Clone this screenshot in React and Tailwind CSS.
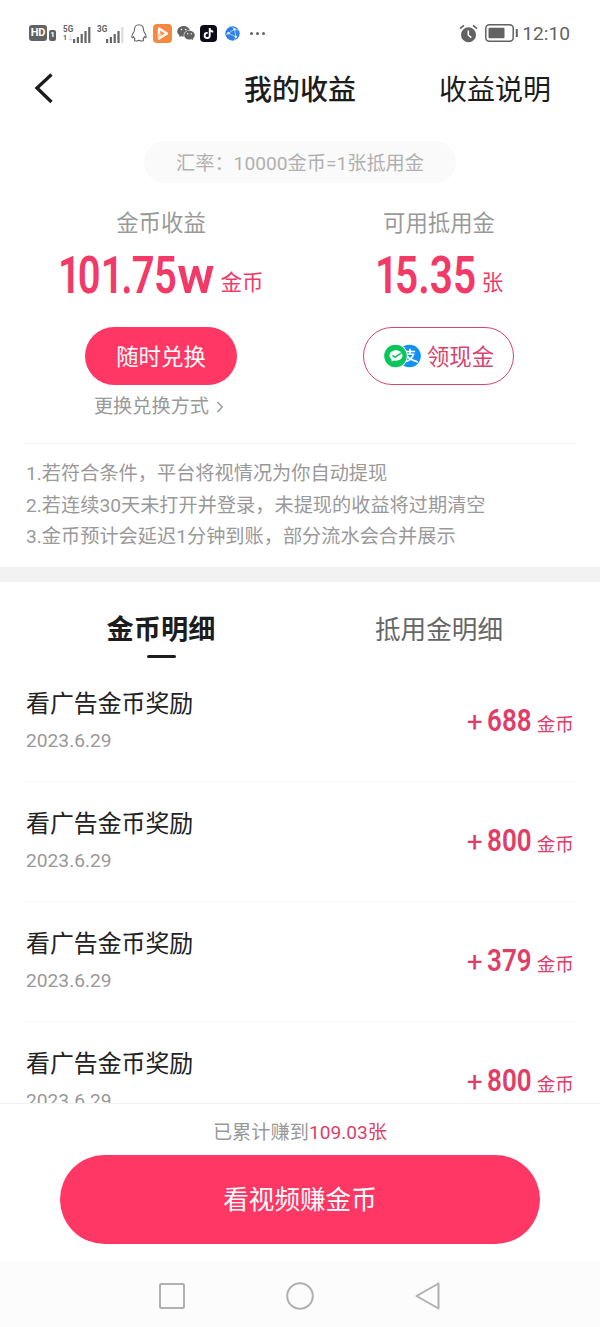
import { AiFillWechat } from 'react-icons/ai'
import { FaTiktok } from 'react-icons/fa6'

const records = [
  { id: 1, title: '看广告金币奖励', date: '2023.6.29', amount: '688' },
  { id: 2, title: '看广告金币奖励', date: '2023.6.29', amount: '800' },
  { id: 3, title: '看广告金币奖励', date: '2023.6.29', amount: '379' },
  { id: 4, title: '看广告金币奖励', date: '2023.6.29', amount: '800' },
]

const notes = [
  '1.若符合条件，平台将视情况为你自动提现',
  '2.若连续30天未打开并登录，未提现的收益将过期清空',
  '3.金币预计会延迟1分钟到账，部分流水会合并展示',
]

// Signal bars, the last one is faded when the signal is not full
function SignalIcon({ faded }) {
  return (
    <svg className="h-4 w-[18px]" viewBox="0 0 18 16" fill="#666" aria-hidden="true">
      <rect x="0" y="12" width="2.2" height="4" />
      <rect x="3.8" y="10" width="2.2" height="6" />
      <rect x="7.6" y="7" width="2.2" height="9" />
      <rect x="11.4" y="4" width="2.2" height="12" />
      <rect x="15.2" y="0" width="2.2" height="16" fill={faded ? '#ddd' : '#666'} />
    </svg>
  )
}

function PenguinIcon() {
  return (
    <svg
      className="h-[18px] w-4"
      viewBox="0 0 16 18"
      fill="none"
      stroke="#666"
      strokeWidth="1.1"
      strokeLinejoin="round"
      aria-hidden="true"
    >
      <path d="M8 .8c-2.8 0-4.5 2-4.5 4.8 0 .8-.1 1.3-.5 2C1.8 9.400.8 11.200.8 12.800c0 1.200.7 1 1.700-.300.300 1 .8 1.800 1.500 2.400-.9.500-1 1.900.6 2.100 1.300.1 2.400-.2 3.400-.8 1 .6 2.100.9 3.400.8 1.600-.2 1.500-1.600.6-2.100.7-.6 1.200-1.400 1.500-2.400 1 1.300 1.700 1.500 1.700.3 0-1.600-1-3.400-2.200-5.200-.4-.7-.5-1.200-.5-2C12.500 2.800 10.800.8 8 .8z" />
    </svg>
  )
}

function VideoAppIcon() {
  return (
    <svg className="h-[19px] w-[19px]" viewBox="0 0 19 19" aria-hidden="true">
      <rect width="19" height="19" rx="4" fill="#f5893f" />
      <path
        d="M6 4.600 14 9.600 6 14.600z"
        fill="#f5893f"
        stroke="#fff"
        strokeWidth="2.300"
        strokeLinejoin="round"
      />
      <path d="M4.500 9.200 9.300 9.800 4.900 14.500z" fill="#ffd3b3" />
    </svg>
  )
}

function GlobeIcon() {
  return (
    <svg className="h-[15px] w-[15px]" viewBox="0 0 15 15" aria-hidden="true">
      <circle cx="7.5" cy="7.5" r="7.2" fill="#2f80e4" />
      <path
        d="M9.500 3.300 3.300 7.200 10.800 10.800zM9.500 3.300 7 .5M3.300 7.200.5 9M10.800 10.800 9.500 14.500M9.500 3.300l4.500 1"
        fill="none"
        stroke="#b9d8fb"
        strokeWidth=".8"
      />
      <circle cx="9.500" cy="3.300" r="1.200" fill="#e4f1ff" />
      <circle cx="3.300" cy="7.200" r="1.200" fill="#e4f1ff" />
      <circle cx="10.800" cy="10.800" r="1.200" fill="#e4f1ff" />
    </svg>
  )
}

function AlarmIcon() {
  return (
    <svg className="h-[19px] w-[19px]" viewBox="0 0 19 19" fill="none" aria-hidden="true">
      <circle cx="9.500" cy="10.700" r="7.500" fill="#626262" />
      <path d="M9.300 6.500v4.500l3 2.700" stroke="#fff" strokeWidth="1.600" />
      <path d="M1 4.600 5 1.400M18 4.600 14 1.400" stroke="#626262" strokeWidth="1.700" />
    </svg>
  )
}

function BatteryIcon() {
  return (
    <svg className="h-[18px] w-[34px]" viewBox="0 0 34 18" fill="none" aria-hidden="true">
      <rect x=".8" y=".8" width="27.400" height="16.400" rx="3.500" stroke="#626262" strokeWidth="1.500" />
      <rect x="3.500" y="3.700" width="16" height="10.600" rx="1" fill="#626262" />
      <path d="M31.800 5v8" stroke="#626262" strokeWidth="2" />
    </svg>
  )
}

function StatusBar() {
  return (
    <div className="flex h-[66px] items-center pr-[30px] pl-[29px] text-[#626262]">
      <div className="flex h-4 w-[18px] items-center justify-center rounded-[3px] bg-[#626262] text-[11px] font-bold tracking-tight text-white">
        HD
      </div>
      <div className="mt-1 ml-[2px] flex h-[11px] w-[7px] items-center justify-center rounded-[2px] bg-[#626262] text-[8px] font-bold text-white">
        1
      </div>
      <div className="ml-[7px] flex items-end">
        <div className="-mr-[1px] flex h-[19px] w-[11px] flex-col text-[9px] leading-[10px] font-bold">
          <span className="origin-left scale-x-90">5G</span>
          <span className="text-[7px] leading-[9px]">1<span className="text-[#ccc]">↓</span></span>
        </div>
        <SignalIcon />
      </div>
      <div className="ml-[6px] flex items-end">
        <div className="-mr-[2px] h-[19px] w-[11px] text-[9px] leading-[10px] font-bold">
          <div className="origin-left scale-x-90">3G</div>
        </div>
        <SignalIcon faded />
      </div>
      <div className="ml-[7px]"><PenguinIcon /></div>
      <div className="ml-[6px]"><VideoAppIcon /></div>
      <AiFillWechat className="ml-[4px] h-5 w-5" />
      <div className="ml-[4px] flex h-[17px] w-[17px] items-center justify-center rounded-[4px] bg-[#0d0a18]">
        <FaTiktok className="h-[11px] w-[11px] text-white" />
      </div>
      <div className="ml-[8px]"><GlobeIcon /></div>
      <div className="ml-[10px] flex gap-[3px]">
        <span className="h-[3px] w-[3px] rounded-full bg-[#626262]" />
        <span className="h-[3px] w-[3px] rounded-full bg-[#626262]" />
        <span className="h-[3px] w-[3px] rounded-full bg-[#626262]" />
      </div>
      <div className="ml-auto flex items-center">
        <AlarmIcon />
        <div className="ml-[7px]"><BatteryIcon /></div>
        <span className="ml-[3px] pt-px text-[19.2px] leading-6">12:10</span>
      </div>
    </div>
  )
}

function PayIcons() {
  return (
    <svg className="h-6 w-[37px]" viewBox="0 0 37 24" aria-hidden="true">
      <circle cx="25.500" cy="12" r="11.300" fill="#1190f5" />
      <path
        d="M21 7.500h10M26 4.800v5M22 10.200h7.500c-1.200 4-4 6.300-8 7.600M22.500 11c2 3.500 6 5.500 11.500 7"
        fill="none"
        stroke="#fff"
        strokeWidth="1.600"
      />
      <circle cx="11.500" cy="12" r="12.300" fill="#fff" />
      <circle cx="11.500" cy="12" r="11.300" fill="#07c75b" />
      <path d="M12 6.300c-3.700 0-6.500 2.300-6.500 5.300 0 1.700.9 3.100 2.300 4.100l-.3 2 2.200-1.200c.7.2 1.500.3 2.300.3 3.700 0 6.500-2.300 6.500-5.200 0-3-2.800-5.300-6.500-5.300z" fill="#fff" />
      <path d="m8.500 11.400 2.500 2 6.800-4.700" fill="none" stroke="#07c75b" strokeWidth="1.500" />
    </svg>
  )
}

function RecordRow({ title, date, amount }) {
  return (
    <li className="mx-[25px] flex h-[120px] shrink-0 items-start justify-between border-b border-[#f7f7f7]">
      <div className="pt-[26px] pl-[1px]">
        <div className="text-[23.900px] leading-8 text-[#222]">{title}</div>
        <div className="mt-[9px] text-[19.2px] leading-6 text-[#999]">{date}</div>
      </div>
      <div className="flex items-baseline pt-[41px] pr-[1px] text-[#e03d68]">
        <span className="w-[20px] text-[28px] leading-9">+</span>
        <span className="w-[50px] text-[31px] leading-9 font-semibold">
          <span className="inline-block origin-left scale-x-[0.84]">{amount}</span>
        </span>
        <span className="text-[18.7px] leading-9">金币</span>
      </div>
    </li>
  )
}

export default function App() {
  return (
    <div className="flex h-[1327px] w-[600px] flex-col overflow-hidden bg-white font-[Roboto,'Noto_Sans_CJK_SC',sans-serif]">
      <StatusBar />

      {/* Title bar */}
      <header className="grid h-11 grid-cols-3 items-center text-[28px] leading-10 text-[#1c1c1c]">
        <svg className="ml-[33px] h-8 w-6" viewBox="0 0 24 32" fill="none" aria-label="返回">
          <path d="M18.500 1.500 4 15 18.500 29" stroke="#1c1c1c" strokeWidth="3.300" />
        </svg>
        <h1 className="pt-[5px] text-center font-medium">我的收益</h1>
        <button className="mr-[49px] pt-[5px] text-right whitespace-nowrap">收益说明</button>
      </header>

      <div className="mx-auto mt-[31px] flex h-[42px] w-[312px] items-center justify-center rounded-full bg-[#fafafa] pt-[5px] text-[19.2px] text-[#b0b0b0]">
        汇率：10000金币=1张抵用金
      </div>

      {/* Balances */}
      <section className="mt-[26px] grid h-[217px] grid-cols-2 px-[22px]">
        <div className="flex flex-col items-center">
          <div className="text-[22.4px] leading-7 text-[#999]">金币收益</div>
          <div className="mt-[13px] flex h-[52px] items-baseline text-[#f23a68]">
            <span className="w-[162px] text-[52px] leading-[52px] font-semibold whitespace-nowrap">
              <span className="inline-block origin-left scale-x-[0.77]">
                <span className="tracking-[-4px]">1</span>0<span className="tracking-[-3px]">1</span>
                <span className="tracking-[-1px]">.7</span>5
                <span className="ml-[1px] inline-block origin-left scale-x-[1.26]">w</span>
              </span>
            </span>
            <span className="relative -top-[3px] text-[21.600px] leading-8">金币</span>
          </div>
          <button className="mt-[25px] h-[58px] w-[152px] rounded-full bg-[#ff3765] pt-[3px] text-[22.4px] text-white">
            随时兑换
          </button>
          <div className="mt-[10px] mr-[4px] flex items-center gap-[7px] text-[19.2px] leading-6 text-[#999]">
            更换兑换方式
            <svg className="h-3 w-2" viewBox="0 0 8 12" fill="none" aria-hidden="true">
              <path d="m1.500 1 4.700 5-4.700 5" stroke="#999" strokeWidth="1.400" />
            </svg>
          </div>
        </div>
        <div className="flex flex-col items-center">
          <div className="text-[22.4px] leading-7 text-[#999]">可用抵用金</div>
          <div className="mt-[13px] flex h-[52px] items-baseline text-[#f23a68]">
            <span className="w-[107px] text-[52px] leading-[52px] font-semibold whitespace-nowrap">
              <span className="inline-block origin-left scale-x-[0.78]">
                <span className="tracking-[-4px]">1</span>5.35
              </span>
            </span>
            <span className="relative -top-[3px] text-[21.600px] leading-8">张</span>
          </div>
          <button className="mt-[25px] mr-[2px] flex h-[58px] w-[151px] items-center justify-center gap-[6px] rounded-full border border-[#d8446c] pl-[2px] text-[22.4px] text-[#d8446c]">
            <PayIcons />
            <span className="pt-[3px]">领现金</span>
          </button>
        </div>
      </section>

      <div className="mx-[25px] mt-[17px] h-px bg-[#f5f5f5]" />

      <ul className="mt-[14px] pl-[26px] text-[19.2px] leading-[31.700px] text-[#999]">
        {notes.map((note) => (
          <li key={note}>{note}</li>
        ))}
      </ul>

      <div className="mt-[14px] h-[15px] shrink-0 bg-[#f2f2f2]" />

      {/* Tabs */}
      <div className="grid h-[80px] shrink-0 grid-cols-2 px-[22px]">
        <div className="flex flex-col items-center pt-[30px]">
          <span className="text-[27.200px] leading-9 font-bold text-[#1c1c1c]">金币明细</span>
          <span className="mt-[7px] h-[3px] w-[29px] rounded-full bg-[#1c1c1c]" />
        </div>
        <div className="pt-[30px] text-center text-[25.600px] leading-9 text-[#666]">抵用金明细</div>
      </div>

      <ul className="flex min-h-0 flex-1 flex-col overflow-hidden">
        {records.map((record) => (
          <RecordRow key={record.id} {...record} />
        ))}
      </ul>

      {/* Bottom action */}
      <footer className="flex h-[158px] shrink-0 flex-col items-center border-t border-[#f2f2f2] pt-[17px]">
        <p className="text-[19.2px] leading-6 text-[#999]">
          已累计赚到<span className="text-[#dc3f6a]">109.03张</span>
        </p>
        <button className="mt-[10px] h-[89px] w-[480px] rounded-full bg-[#ff3765] pt-px text-[25.600px] text-white">
          看视频赚金币
        </button>
      </footer>

      {/* System navigation */}
      <nav className="flex h-[66px] shrink-0 items-center justify-center gap-[100px] bg-[#fcfcfc] pt-[3px]">
        <svg className="h-7 w-7" viewBox="0 0 28 28" fill="none" stroke="#b0b0b0" strokeWidth="2">
          <rect x="2" y="2" width="24" height="24" rx="1" />
        </svg>
        <svg className="h-7 w-7" viewBox="0 0 28 28" fill="none" stroke="#b0b0b0" strokeWidth="2">
          <circle cx="14" cy="14" r="12.800" />
        </svg>
        <svg className="h-7 w-7" viewBox="0 0 28 28" fill="none" stroke="#b0b0b0" strokeWidth="2" strokeLinejoin="round">
          <path d="M24.500 1.500v25L2.500 14z" />
        </svg>
      </nav>
    </div>
  )
}
